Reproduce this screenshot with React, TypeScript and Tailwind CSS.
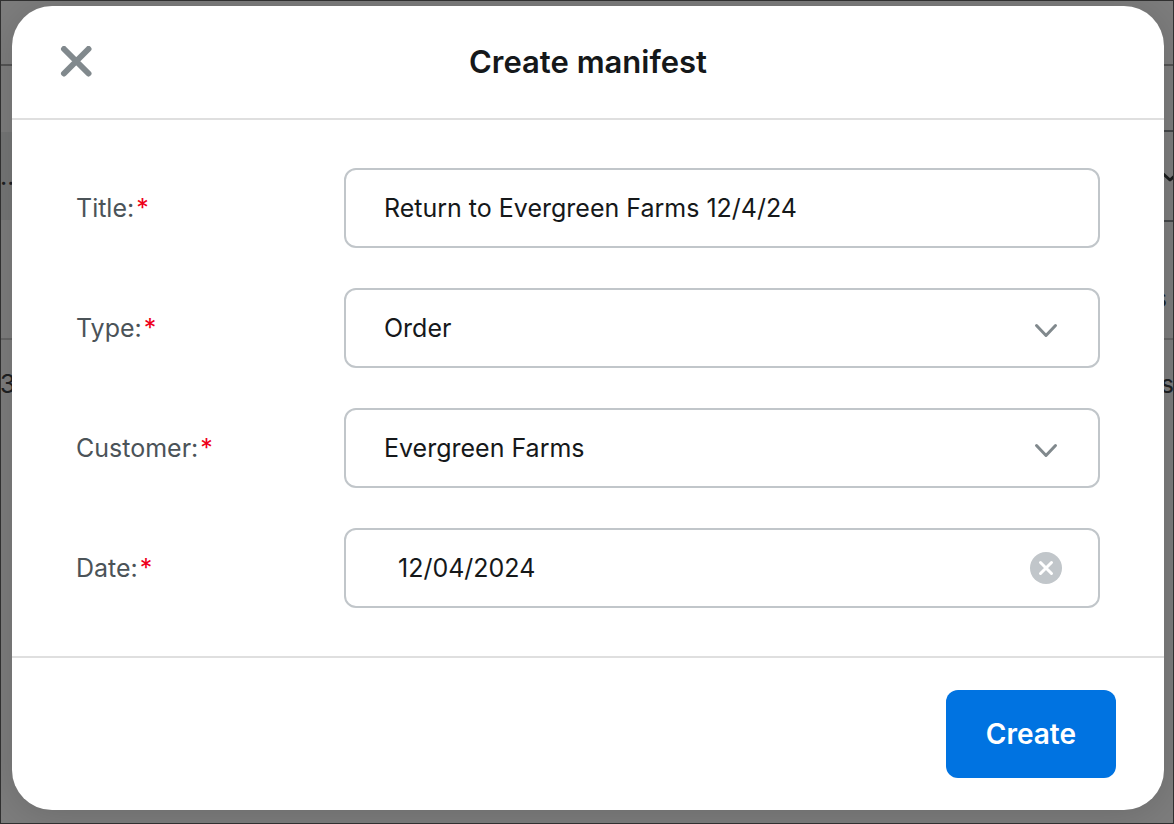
import { useState } from 'react';
import type { ReactNode } from 'react';

const customers = ['Evergreen Farms', 'Blue Ridge Growers', 'Sunset Supply'];
const types = ['Order', 'Transfer', 'Return'];

const controlClass =
  'block h-20 w-full appearance-none rounded-xl border-2 border-[#c1c6ca] bg-white px-[38px] text-[25px] leading-8 text-[#15181a] outline-none';

function Field({ id, label, children }: { id: string; label: string; children: ReactNode }) {
  return (
    <div className="flex items-center">
      <label htmlFor={id} className="w-[268px] shrink-0 text-[25px] leading-8 text-[#4b5358]">
        {label}:<span className="ml-0.5 text-[#ee0019]">*</span>
      </label>
      <div className="relative min-w-0 flex-1">{children}</div>
    </div>
  );
}

function Chevron() {
  return (
    <svg
      className="pointer-events-none absolute top-1/2 right-[42px] mt-0.5 -translate-y-1/2"
      width="24"
      height="16"
      viewBox="0 0 24 16"
      fill="none"
      stroke="#81898d"
      strokeWidth="3"
      strokeLinecap="round"
      strokeLinejoin="round"
    >
      <path d="M2.5 3.5 L12 13.5 L21.5 3.5" />
    </svg>
  );
}

function PageBehind() {
  return (
    <div className="absolute inset-0 overflow-hidden bg-[#fafafa] text-[25px] leading-8 text-[#3c4044]" aria-hidden="true">
      <div className="h-[66px] border-b-2 border-[#a8a8a8]" />
      <div className="h-16" />
      <div className="flex h-[92px] items-center justify-between">
        <div className="flex h-[88px] w-1/2 items-center bg-[#eaecec]">
          <span>...</span>
        </div>
        <div className="flex h-full w-1/2 items-center justify-end border-y-2 border-[#8a8e92]">
          <svg width="24" height="16" viewBox="0 0 24 16" fill="none" stroke="#34383a" strokeWidth="3" strokeLinecap="round" strokeLinejoin="round" className="-mr-2">
            <path d="M2 3 L12 12 L22 3" />
          </svg>
        </div>
      </div>
      <div className="flex h-[118px] items-center justify-end border-b-2 border-[#cfcfcf] pt-9 pr-[7px]">
        <span>s</span>
      </div>
      <div className="flex h-[88px] items-center justify-between">
        <span>3</span>
        <span>es</span>
      </div>
    </div>
  );
}

export default function App() {
  const [title, setTitle] = useState('Return to Evergreen Farms 12/4/24');
  const [type, setType] = useState('Order');
  const [customer, setCustomer] = useState('Evergreen Farms');
  const [date, setDate] = useState('12/04/2024');

  return (
    <div className="relative min-h-screen font-['Inter','Liberation_Sans',sans-serif]">
      <PageBehind />

      <div className="relative min-h-screen overflow-hidden border border-[#303030] bg-black/50 pt-[5px] pr-[9px] pb-[13px] pl-[11px]">
        <div
          role="dialog"
          aria-labelledby="dialog-title"
          className="rounded-[40px] bg-white shadow-[0_4px_40px_rgba(0,0,0,0.15)]"
        >
          <header className="grid h-[114px] grid-cols-[1fr_auto_1fr] items-center border-b-2 border-[#dfdfdf] px-12">
            <button type="button" aria-label="Close" className="w-8">
              <svg width="32" height="32" viewBox="0 0 32 32" fill="none" stroke="#81898d" strokeWidth="6" strokeLinecap="round">
                <path d="M4 3 L28.5 27.5 M28.5 3 L4 27.5" />
              </svg>
            </button>
            <h1 id="dialog-title" className="text-[31px] leading-10 font-semibold text-[#15181a]">
              Create manifest
            </h1>
          </header>

          <form onSubmit={(e) => e.preventDefault()}>
            <div className="flex flex-col gap-10 px-16 py-12">
              <Field id="title" label="Title">
                <input id="title" type="text" value={title} onChange={(e) => setTitle(e.target.value)} className={controlClass} />
              </Field>

              <Field id="type" label="Type">
                <select id="type" value={type} onChange={(e) => setType(e.target.value)} className={controlClass}>
                  {types.map((name) => (
                    <option key={name}>{name}</option>
                  ))}
                </select>
                <Chevron />
              </Field>

              <Field id="customer" label="Customer">
                <select id="customer" value={customer} onChange={(e) => setCustomer(e.target.value)} className={controlClass}>
                  {customers.map((name) => (
                    <option key={name}>{name}</option>
                  ))}
                </select>
                <Chevron />
              </Field>

              <Field id="date" label="Date">
                <input
                  id="date"
                  type="text"
                  value={date}
                  onChange={(e) => setDate(e.target.value)}
                  className="block h-20 w-full rounded-xl border-2 border-[#c1c6ca] bg-white px-[52px] text-[25px] leading-8 text-[#15181a] outline-none"
                />
                <button
                  type="button"
                  aria-label="Clear date"
                  onClick={() => setDate('')}
                  className="absolute top-1/2 right-[38px] -translate-y-1/2"
                >
                  <svg width="32" height="32" viewBox="0 0 32 32" fill="none">
                    <circle cx="16" cy="16" r="16" fill="#c1c6ca" />
                    <path d="M10.5 10.5 L21.5 21.5 M21.5 10.5 L10.5 21.5" stroke="white" strokeWidth="3" strokeLinecap="round" />
                  </svg>
                </button>
              </Field>
            </div>

            <footer className="flex justify-end border-t-2 border-[#dfdfdf] px-12 py-8">
              <button type="submit" className="h-[88px] rounded-xl bg-[#0073e1] px-10 text-[28px] leading-8 font-semibold text-white">
                Create
              </button>
            </footer>
          </form>
        </div>
      </div>
    </div>
  );
}
